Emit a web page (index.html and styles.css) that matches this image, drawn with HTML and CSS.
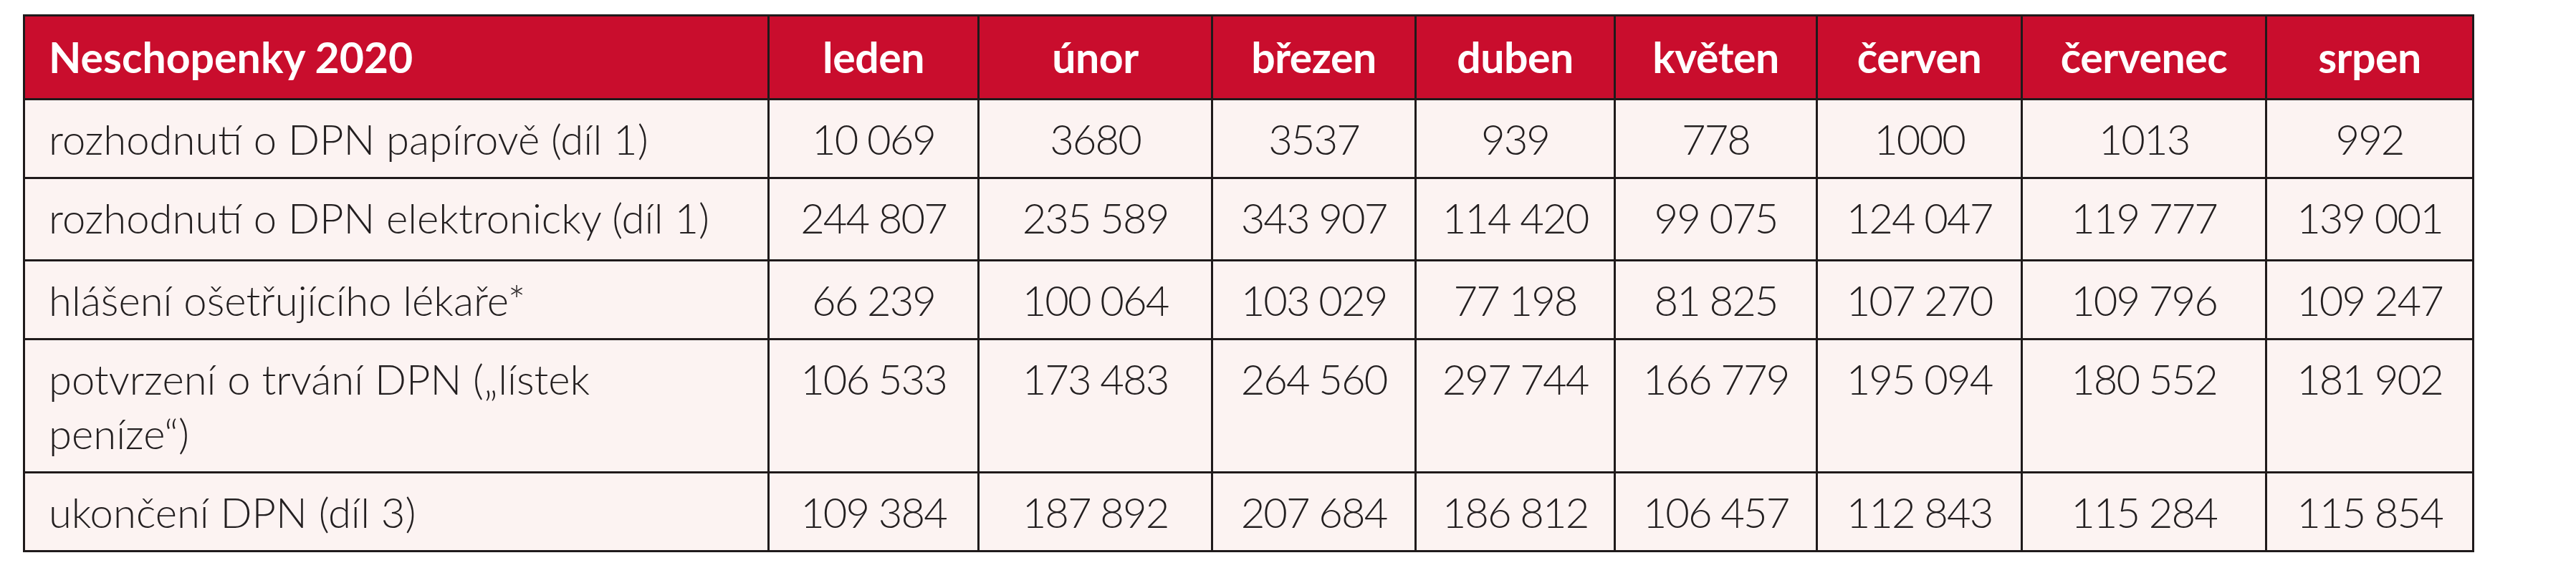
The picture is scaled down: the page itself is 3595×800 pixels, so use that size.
FILE: index.html
```html
<!DOCTYPE html>
<html lang="cs">
<head>
<meta charset="utf-8">
<title>Neschopenky 2020</title>
<link rel="stylesheet" href="styles.css">
</head>
<body>
<table class="sheet">
  <colgroup>
    <col class="c-label">
    <col class="c-1">
    <col class="c-2">
    <col class="c-3">
    <col class="c-4">
    <col class="c-5">
    <col class="c-6">
    <col class="c-7">
    <col class="c-8">
  </colgroup>
  <thead>
    <tr class="head">
      <th class="label">Neschopenky 2020</th>
      <th>leden</th>
      <th>únor</th>
      <th>březen</th>
      <th>duben</th>
      <th>květen</th>
      <th>červen</th>
      <th>červenec</th>
      <th>srpen</th>
    </tr>
  </thead>
  <tbody>
    <tr class="r1">
      <td class="label">rozhodnutí o DPN papírově (díl 1)</td>
      <td>10 069</td><td>3680</td><td>3537</td><td>939</td><td>778</td><td>1000</td><td>1013</td><td>992</td>
    </tr>
    <tr class="r2">
      <td class="label">rozhodnutí o DPN elektronicky (díl 1)</td>
      <td>244 807</td><td>235 589</td><td>343 907</td><td>114 420</td><td>99 075</td><td>124 047</td><td>119 777</td><td>139 001</td>
    </tr>
    <tr class="r3">
      <td class="label">hlášení ošetřujícího lékaře*</td>
      <td>66 239</td><td>100 064</td><td>103 029</td><td>77 198</td><td>81 825</td><td>107 270</td><td>109 796</td><td>109 247</td>
    </tr>
    <tr class="r4">
      <td class="label">potvrzení o trvání DPN („lístek<br>peníze“)</td>
      <td>106 533</td><td>173 483</td><td>264 560</td><td>297 744</td><td>166 779</td><td>195 094</td><td>180 552</td><td>181 902</td>
    </tr>
    <tr class="r5">
      <td class="label">ukončení DPN (díl 3)</td>
      <td>109 384</td><td>187 892</td><td>207 684</td><td>186 812</td><td>106 457</td><td>112 843</td><td>115 284</td><td>115 854</td>
    </tr>
  </tbody>
</table>
</body>
</html>
```

FILE: styles.css
```css
html, body {
  margin: 0;
  padding: 0;
  background: #ffffff;
}

body {
  padding: 20px 0 0 32px;
  font-family: "Lato", "Liberation Sans", sans-serif;
  color: #231f20;
}

.sheet {
  border-collapse: collapse;
  table-layout: fixed;
  width: 3418px;
}

.c-label { width: 1039px; }
.c-1 { width: 293px; }
.c-2 { width: 326px; }
.c-3 { width: 284px; }
.c-4 { width: 278px; }
.c-5 { width: 282px; }
.c-6 { width: 286px; }
.c-7 { width: 341px; }
.c-8 { width: 289px; }

.sheet th,
.sheet td {
  border: 3px solid #1f1a1b;
  text-align: center;
  padding: 0 6px;
  box-sizing: border-box;
}

.sheet .label {
  text-align: left;
  padding-left: 33px;
  letter-spacing: 0;
}

.head {
  height: 117px;
}

.head th {
  background: #c90d2d;
  color: #ffffff;
  font-weight: 700;
  font-size: 59px;
  line-height: 70px;
  vertical-align: middle;
  letter-spacing: -0.5px;
}

.sheet td {
  background: #fcf3f2;
  font-weight: 300;
  font-size: 58px;
  line-height: 76px;
  vertical-align: top;
  padding-top: 16px;
  letter-spacing: -2px;
}

.r1 { height: 110px; }
.r2 { height: 115px; }
.r3 { height: 110px; }
.r4 { height: 186px; }
.r5 { height: 110px; }
```
